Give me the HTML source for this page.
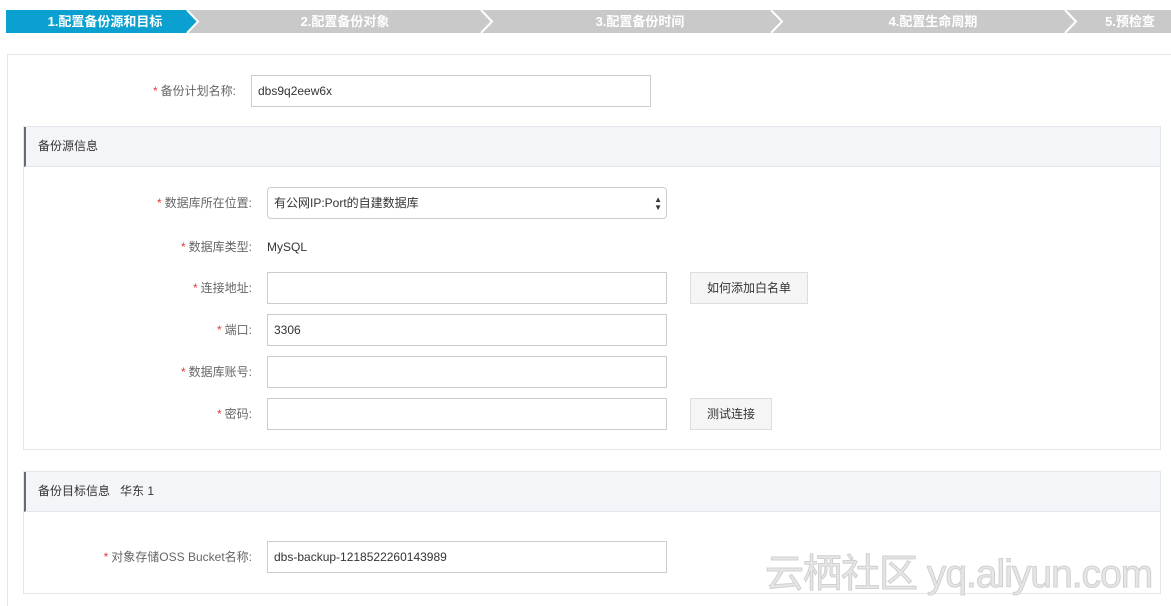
<!DOCTYPE html>
<html style="width:1171px;height:606px;overflow:hidden"><head><meta charset="utf-8"><style>
*{box-sizing:border-box;margin:0;padding:0}
body{width:1171px;height:606px;background:#fff;position:relative;overflow:hidden;font-family:"Liberation Sans","Noto Sans CJK SC",sans-serif;font-size:12px;color:#333}
.a{position:absolute}
.step{position:absolute;top:10px;height:23px;color:#fff;font-weight:bold;font-size:13px;line-height:23px;text-align:center}
.inp{position:absolute;height:32px;border:1px solid #ccc;background:#fff;padding-left:6px;line-height:30px;font-size:12px;color:#333}
.lab{position:absolute;text-align:right;color:#666;font-size:12px;line-height:32px}
.lab b{color:#e4393c;font-weight:normal;margin-right:3px}
.btn{position:absolute;height:32px;border:1px solid #ddd;background:#f5f5f5;text-align:center;line-height:30px;font-size:12px;color:#333}
.sec{position:absolute;left:23px;width:1138px;border:1px solid #e3e6ea}
.hd{height:40px;background:#f4f5f9;border-left:2px solid #666a75;border-bottom:1px solid #e3e6ea;line-height:38px;padding-left:12px;font-size:12px;color:#333}
</style></head><body>
<svg class="a" style="left:0;top:10px" width="1171" height="23">
<rect x="6" y="0" width="1165" height="23" fill="#c9c9c9"/>
<polygon points="6,0 187,0 198,11.5 187,23 6,23" fill="#0aa0cf"/>
<g fill="none" stroke="#fff" stroke-width="2">
<polyline points="187,0 198,11.5 187,23"/>
<polyline points="481,0 492,11.5 481,23"/>
<polyline points="771,0 782,11.5 771,23"/>
<polyline points="1065,0 1076,11.5 1065,23"/>
</g></svg>
<div class="step" style="left:20px;width:170px">1.配置备份源和目标</div>
<div class="step" style="left:260px;width:170px">2.配置备份对象</div>
<div class="step" style="left:555px;width:170px">3.配置备份时间</div>
<div class="step" style="left:848px;width:170px">4.配置生命周期</div>
<div class="step" style="left:1085px;width:90px">5.预检查</div>
<div class="a" style="left:7px;top:54px;width:1164px;height:552px;border:1px solid #e3e6ea;border-right:none;border-bottom:none"></div>
<div class="lab" style="left:100px;width:136px;top:75px"><b>*</b>备份计划名称:</div>
<div class="inp" style="left:251px;top:75px;width:400px">dbs9q2eew6x</div>
<div class="sec" style="top:126px;height:324px"><div class="hd">备份源信息</div></div>
<div class="lab" style="left:100px;width:152px;top:187px"><b>*</b>数据库所在位置:</div>
<div class="inp" style="left:267px;top:187px;width:400px;border-radius:4px">有公网IP:Port的自建数据库<span style="position:absolute;right:4px;top:0;font-size:8px;line-height:8px;padding-top:8px">▲<br>▼</span></div>
<div class="lab" style="left:100px;width:152px;top:231px"><b>*</b>数据库类型:</div>
<div class="a" style="left:267px;top:231px;line-height:32px;font-size:12px">MySQL</div>
<div class="lab" style="left:100px;width:152px;top:272px"><b>*</b>连接地址:</div>
<div class="inp" style="left:267px;top:272px;width:400px"></div>
<div class="btn" style="left:690px;top:272px;width:118px">如何添加白名单</div>
<div class="lab" style="left:100px;width:152px;top:314px"><b>*</b>端口:</div>
<div class="inp" style="left:267px;top:314px;width:400px">3306</div>
<div class="lab" style="left:100px;width:152px;top:356px"><b>*</b>数据库账号:</div>
<div class="inp" style="left:267px;top:356px;width:400px"></div>
<div class="lab" style="left:100px;width:152px;top:398px"><b>*</b>密码:</div>
<div class="inp" style="left:267px;top:398px;width:400px"></div>
<div class="btn" style="left:690px;top:398px;width:82px">测试连接</div>
<div class="sec" style="top:471px;height:123px"><div class="hd">备份目标信息&nbsp;&nbsp;&nbsp;华东 1</div></div>
<div class="lab" style="left:60px;width:192px;top:541px"><b>*</b>对象存储OSS Bucket名称:</div>
<div class="inp" style="left:267px;top:541px;width:400px">dbs-backup-1218522260143989</div>
<div class="a" style="left:765px;top:552px;font-size:39px;line-height:46px;color:#e6e6e6;-webkit-text-stroke:1px #d0d0d0;letter-spacing:-1px;white-space:nowrap">云栖社区 yq.aliyun.com</div>
</body></html>
